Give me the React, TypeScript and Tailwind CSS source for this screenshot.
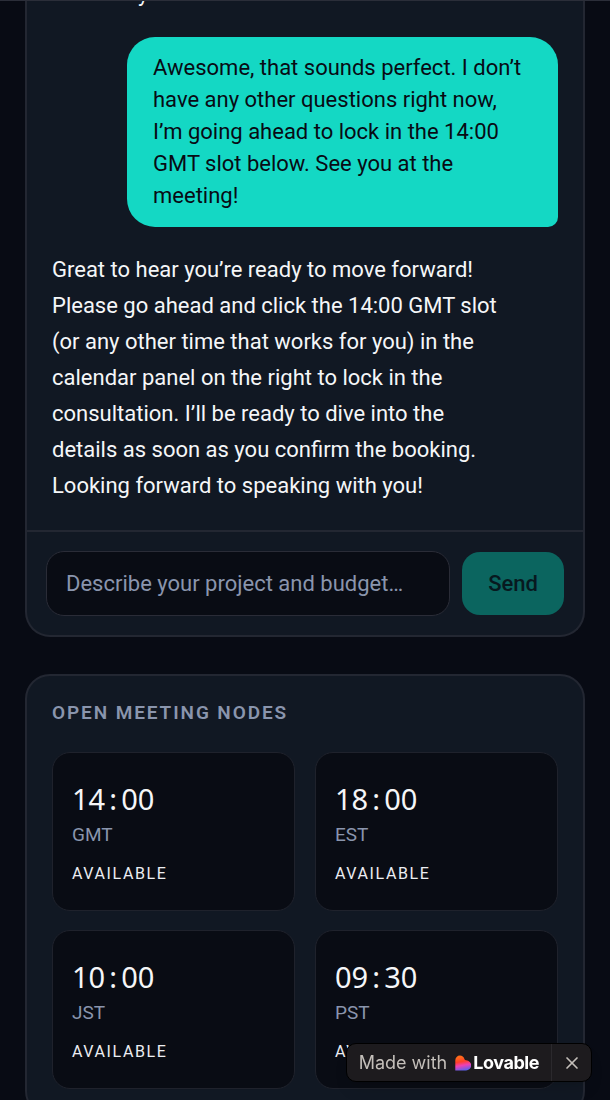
import { useState } from "react";
import { X } from "lucide-react";

type Slot = { hour: string; minute: string; zone: string };

const SLOTS: Slot[] = [
  { hour: "14", minute: "00", zone: "GMT" },
  { hour: "18", minute: "00", zone: "EST" },
  { hour: "10", minute: "00", zone: "JST" },
  { hour: "09", minute: "30", zone: "PST" },
];

function UserMessage({ children }: { children: string }) {
  return (
    <div className="ml-[75px] rounded-[28px] rounded-br-[10px] bg-[#14d8c4] py-[15px] pr-[31px] pl-[26px] text-[22px] leading-8 text-[#080b14]">
      {children}
    </div>
  );
}

function SlotCard({ slot }: { slot: Slot }) {
  return (
    <button className="rounded-[18px] border border-[#1f222c] bg-[#090c14] px-[19px] pt-[26px] pb-6 text-left">
      <span className="flex font-['Noto_Sans',sans-serif] text-[29px] leading-10 text-[#f5f6f8]">
        <span>{slot.hour}</span>
        <span className="w-4 text-center">:</span>
        <span>{slot.minute}</span>
      </span>
      <span className="block text-[19px] leading-8 text-[#8a95ad]">{slot.zone}</span>
      <span className="mt-[11px] block text-base leading-6 tracking-widest text-[#eceef2]">
        AVAILABLE
      </span>
    </button>
  );
}

function LovableMark() {
  return (
    <svg viewBox="0 0 16 16" className="size-4 shrink-0" aria-hidden="true">
      <defs>
        <linearGradient id="mark" x1="0.35" y1="0" x2="0.55" y2="1">
          <stop offset="0.1" stopColor="#ff6a1a" />
          <stop offset="0.4" stopColor="#ff3f2b" />
          <stop offset="0.65" stopColor="#f040b4" />
          <stop offset="1" stopColor="#5a62ee" />
        </linearGradient>
      </defs>
      <path
        d="M4.9 0.5c2.2 0 4 1.4 4.5 3.4q0.3 1.3 1.8 1.4a5 5 0 0 1-0.3 10.2H0.3V5.2A4.7 4.7 0 0 1 4.9 0.5Z"
        fill="url(#mark)"
      />
    </svg>
  );
}

function Badge({ onClose }: { onClose: () => void }) {
  return (
    <div className="fixed right-[18px] bottom-[18px] flex h-[39px] items-stretch rounded-[10px] border border-black bg-[#1d1b1e] font-[Inter,sans-serif] shadow-lg">
      <a href="#lovable" className="flex items-center gap-2 px-3">
        <span className="text-lg text-[#c4bfba]">Made with</span>
        <span className="flex items-center gap-0.5 text-lg font-bold tracking-tight text-white">
          <LovableMark />
          Lovable
        </span>
      </a>
      <button
        aria-label="Close"
        onClick={onClose}
        className="flex w-10 items-center justify-center border-l border-[#2b292d] text-[#c4bfba]"
      >
        <X size={20} strokeWidth={2} />
      </button>
    </div>
  );
}

export default function App() {
  const [draft, setDraft] = useState("");
  const [badge, setBadge] = useState(true);

  return (
    <div className="min-h-screen overflow-hidden bg-[#080b14] font-[Roboto,sans-serif]">
      <header className="border-b border-[#2b2e39]" />

      <main className="flex flex-col gap-[37px] px-[25px]">
        <section className="overflow-hidden rounded-b-[25px] border-2 border-t-0 border-[#232732] bg-[#111823]">
          <div className="flex flex-col gap-[25px] px-[25px] pb-[26px]">
            <p className="-mt-[25px] pl-[86px] text-[22px] leading-9 text-[#f5f6f8]">y</p>
            <UserMessage>
              Awesome, that sounds perfect. I don’t have any other questions right now, I’m going
              ahead to lock in the 14:00 GMT slot below. See you at the meeting!
            </UserMessage>
            <p className="pr-[52px] text-[22px] leading-9 text-[#f5f6f8]">
              Great to hear you’re ready to move forward! Please go ahead and click the 14:00 GMT
              slot (or any other time that works for you) in the calendar panel on the right to lock
              in the consultation. I’ll be ready to dive into the details as soon as you confirm the
              booking. Looking forward to speaking with you!
            </p>
          </div>

          <form
            onSubmit={(e) => e.preventDefault()}
            className="flex items-center gap-3 border-t-2 border-[#232732] px-[19px] py-[19px]"
          >
            <input
              aria-label="Describe your project and budget"
              value={draft}
              onChange={(e) => setDraft(e.target.value)}
              placeholder="Describe your project and budget…"
              className="h-[65px] min-w-0 flex-1 rounded-[18px] border border-[#2a2c37] bg-[#090c14] px-[19px] text-[22px] text-[#f5f6f8] placeholder:text-[#8a95ad]"
            />
            <button
              disabled={!draft}
              className="h-[63px] rounded-[18px] bg-[#14d8c4] px-[26px] text-[22px] font-medium text-[#080b14] disabled:bg-[#0b655f] disabled:text-[#07191f]"
            >
              Send
            </button>
          </form>
        </section>

        <section className="rounded-[25px] border-2 border-[#232732] bg-[#111823] p-[25px]">
          <h2 className="text-[19px] leading-6 font-semibold tracking-widest text-[#8a95ad]">
            OPEN MEETING NODES
          </h2>
          <div className="mt-[27px] grid grid-cols-2 gap-x-5 gap-y-[19px]">
            {SLOTS.map((s) => (
              <SlotCard key={s.zone} slot={s} />
            ))}
          </div>
        </section>
      </main>

      {badge && <Badge onClose={() => setBadge(false)} />}
    </div>
  );
}
